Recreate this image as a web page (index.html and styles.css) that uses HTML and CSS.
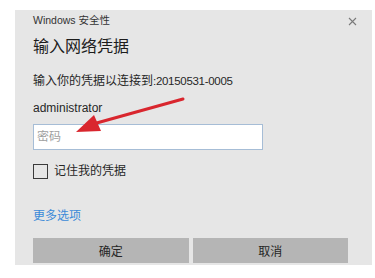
FILE: index.html
```html
<!DOCTYPE html>
<html lang="zh-CN">
<head>
  <meta charset="UTF-8" />
  <meta name="viewport" content="width=device-width, initial-scale=1.0"/>
  <title>Windows 安全性</title>
  <link rel="stylesheet" href="styles.css">
</head>
<body>

  <div class="dialog">
    <div class="dialog-head">
      <span class="app-name">Windows 安全性</span>
      <svg class="close" width="9" height="9" viewBox="0 0 9 9">
        <path d="M1 1 L8 8 M8 1 L1 8" stroke="#7a7a7a" stroke-width="1.1" fill="none"/>
      </svg>
    </div>

    <h1>输入网络凭据</h1>
    <p class="desc">输入你的凭据以连接到<span class="host">:20150531-0005</span></p>
    <p class="user">administrator</p>

    <input class="password" type="password" placeholder="密码">

    <label class="remember">
      <span class="box"></span>
      记住我的凭据
    </label>

    <a class="more" href="#">更多选项</a>

    <div class="actions">
      <button>确定</button>
      <button>取消</button>
    </div>

    <!-- annotation arrow drawn over the screenshot -->
    <svg class="arrow" width="375" height="278" viewBox="0 0 375 278">
      <line x1="183" y1="99" x2="93" y2="124" stroke="#d9262e" stroke-width="3" stroke-linecap="round"/>
      <polygon points="76,132 94,115 101,131" fill="#d9262e"/>
    </svg>
  </div>

</body>
</html>
```

FILE: styles.css
```css
:root {
  --dialog-bg: #e6e6e6;
  --text-color: #262626;
  --btn-color: #b5b5b5;
  --link-color: #3b8ad8;
}

body {
  font-family: "Liberation Sans", "Noto Sans CJK SC", sans-serif;
  background-color: #fff;
  color: var(--text-color);
  margin: 0;
  padding: 10px 15px 0;
}

.dialog {
  background-color: var(--dialog-bg);
  width: 327px;
  height: 253px;
  padding: 0 12px 2px 18px;
  display: flex;
  flex-direction: column;
  align-items: flex-start;
}

.dialog-head {
  display: flex;
  justify-content: space-between;
  align-items: center;
  width: 100%;
  padding-top: 3px;
  height: 14px;
}

.app-name {
  font-size: 10.5px;
  line-height: 14px;
  color: #333;
}

.close {
  margin-right: 3px;
  margin-top: 2px;
}

h1 {
  margin: 8px 0 0;
  font-size: 16px;
  line-height: 24px;
  font-weight: normal;
  color: #1c1c1c;
}

.desc,
.user {
  margin: 0;
  font-size: 12px;
  line-height: 16px;
}

.desc {
  margin-top: 14px;
}

.host {
  font-size: 11.5px;
  letter-spacing: -0.3px;
}

.user {
  margin-top: 11px;
}

.password {
  box-sizing: border-box;
  margin-top: 8px;
  width: 230px;
  height: 26px;
  border: 1px solid #a6bdd6;
  background: #fff;
  padding: 0 3px;
  font-family: inherit;
  font-size: 12px;
  outline: none;
}

.password::placeholder {
  color: #a0a0a0;
}

.remember {
  display: flex;
  align-items: center;
  gap: 6px;
  margin-top: 12px;
  font-size: 12px;
  line-height: 18px;
}

.box {
  box-sizing: border-box;
  width: 15px;
  height: 15px;
  border: 1.5px solid #3a3a3a;
}

.more {
  margin-top: 28px;
  font-size: 12px;
  line-height: 16px;
  color: var(--link-color);
  text-decoration: none;
}

.actions {
  display: flex;
  gap: 4px;
  margin-top: 14px;
  width: 315px;
}

.actions button {
  flex: 1;
  height: 25px;
  border: none;
  background-color: var(--btn-color);
  color: #262626;
  font-family: inherit;
  font-size: 12px;
  padding: 0;
}

.arrow {
  position: absolute;
  top: 0;
  left: 0;
  pointer-events: none;
}
```
